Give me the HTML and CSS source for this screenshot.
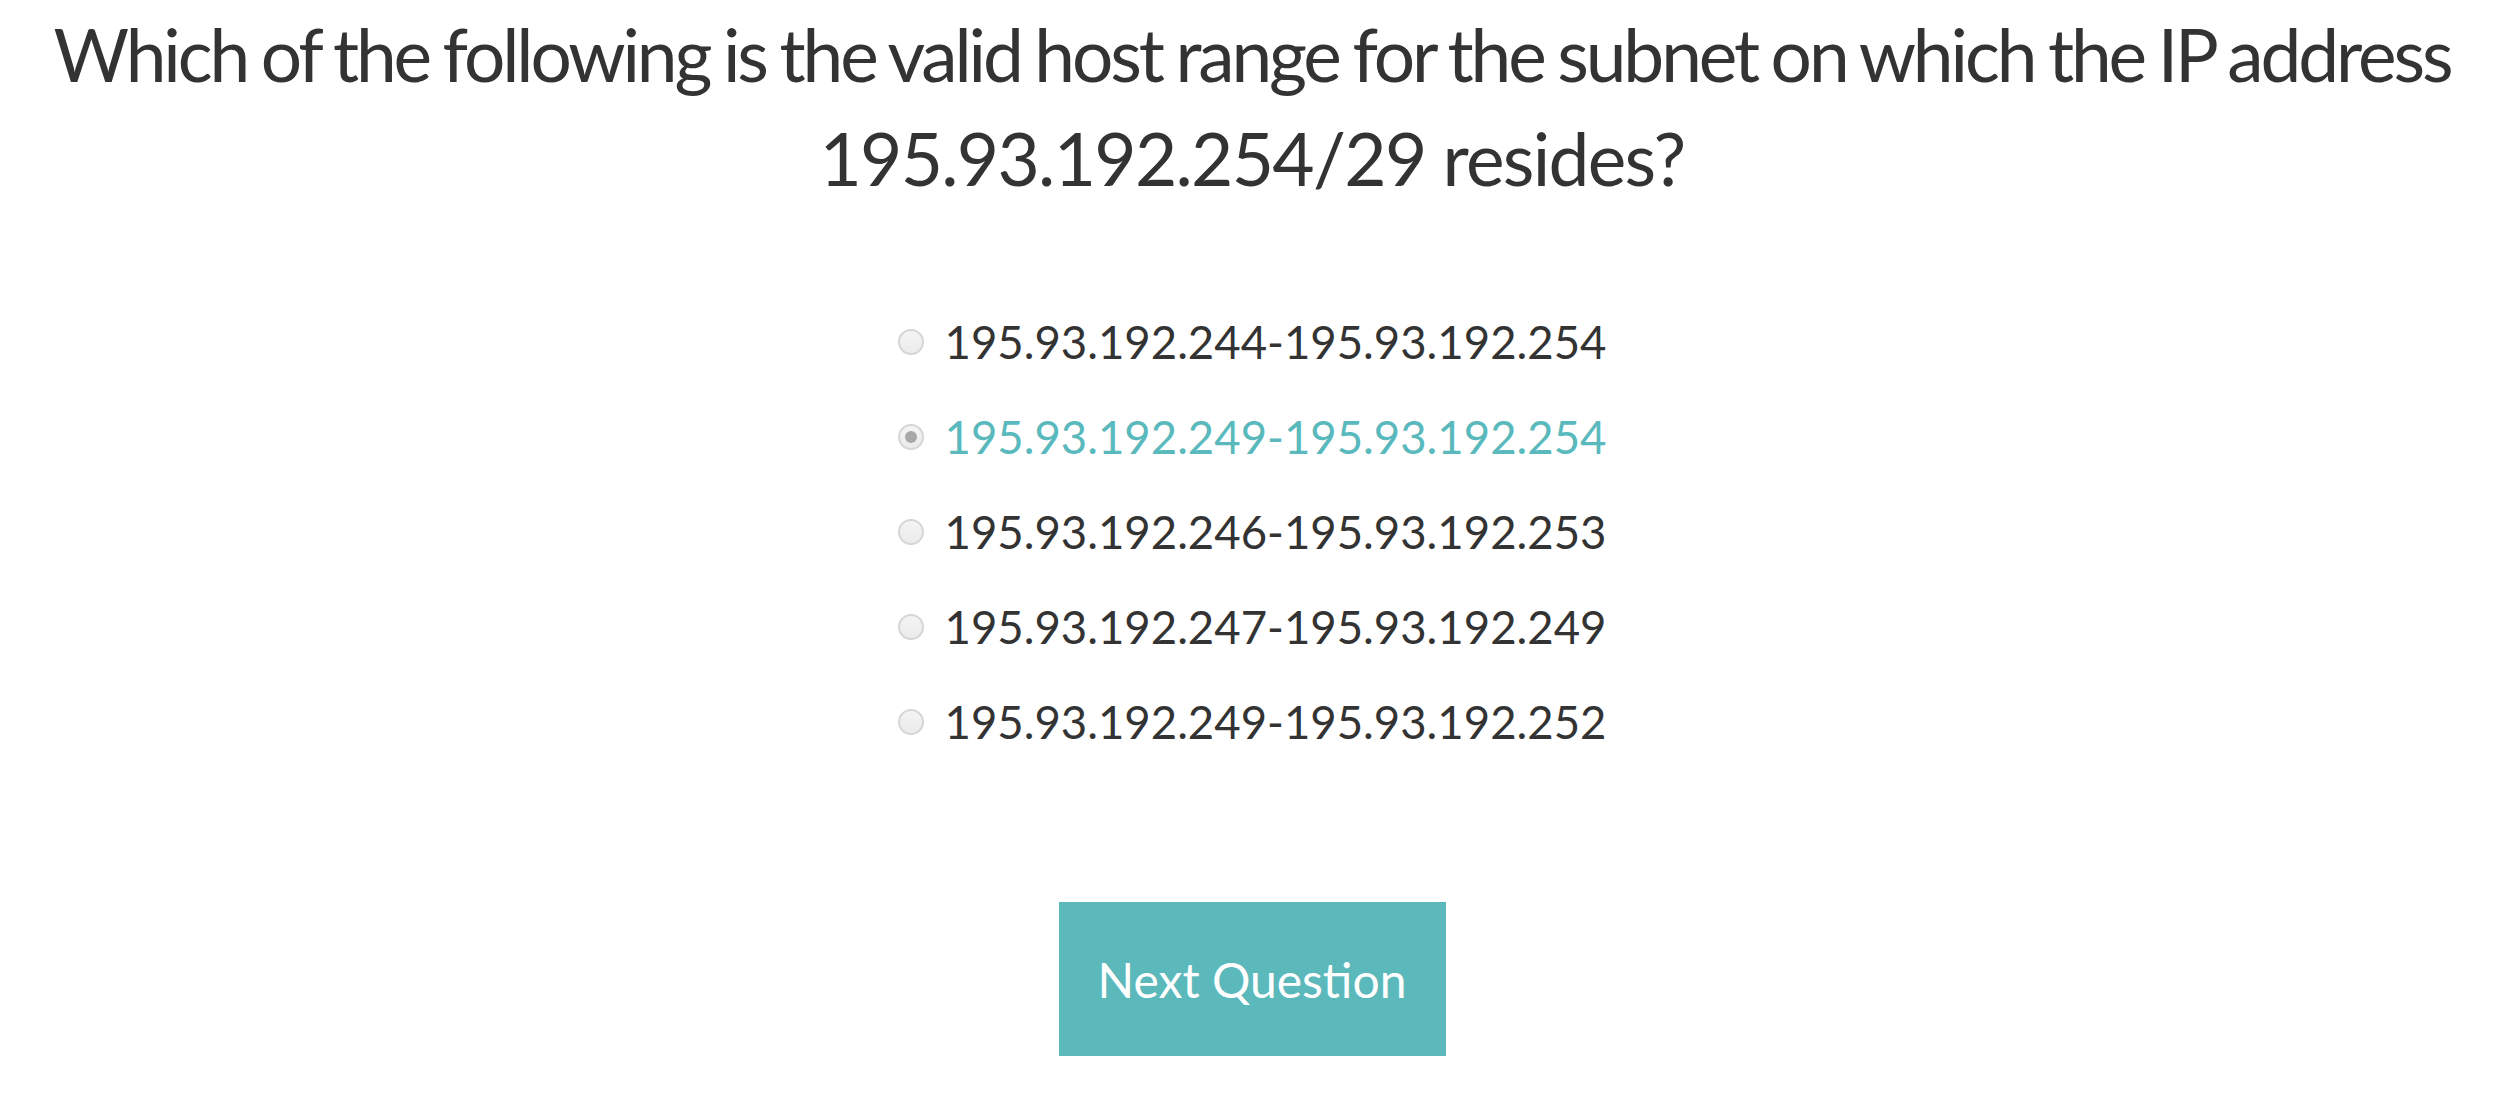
FILE: index.html
```html
<!DOCTYPE html>
<html>
<head>
<meta charset="utf-8">
<link rel="stylesheet" href="styles.css">
</head>
<body>
<main class="quiz">
  <h1 class="question">Which of the following is the valid host range for the subnet on which the IP address<br><span class="question-ip">195.93.192.254/29 resides?</span></h1>
  <form class="options">
    <label class="option"><input type="radio" name="a"><span class="radio"></span><span class="label">195.93.192.244-195.93.192.254</span></label>
    <label class="option selected"><input type="radio" name="a" checked><span class="radio"></span><span class="label">195.93.192.249-195.93.192.254</span></label>
    <label class="option"><input type="radio" name="a"><span class="radio"></span><span class="label">195.93.192.246-195.93.192.253</span></label>
    <label class="option"><input type="radio" name="a"><span class="radio"></span><span class="label">195.93.192.247-195.93.192.249</span></label>
    <label class="option"><input type="radio" name="a"><span class="radio"></span><span class="label">195.93.192.249-195.93.192.252</span></label>
  </form>
  <div class="actions"><button class="next" type="button">Next Question</button></div>
</main>
</body>
</html>
```
FILE: styles.css
```css
html, body { margin: 0; padding: 0; background: #fff; }
body { font-family: Lato, "Open Sans", sans-serif; color: #333; }
.quiz { display: flex; flex-direction: column; align-items: center; padding-right: 16px; }
.question {
  margin: 0;
  padding: 2px 10px 0;
  font-weight: 400;
  font-size: 73px;
  line-height: 104px;
  letter-spacing: -3.1px;
  word-spacing: -2px;
  white-space: nowrap;
  text-align: center;
  color: #333;
}
.question-ip { letter-spacing: -1.7px; word-spacing: 0; }
.options { display: flex; flex-direction: column; align-items: flex-start; margin-top: 84px; }
.option { display: flex; align-items: center; height: 95px; font-size: 45.5px; cursor: pointer; }
.option input { display: none; }
.radio {
  width: 26px; height: 26px; box-sizing: border-box;
  border-radius: 50%;
  border: 2px solid #d6d6d6;
  background: linear-gradient(#f4f4f4, #ebebeb);
  margin-right: 21px;
  display: flex; align-items: center; justify-content: center;
}
.selected .radio::after { content: ""; width: 12px; height: 12px; border-radius: 50%; background: #a8a8a8; }
.selected .label { color: #5ab9bc; }
.actions { margin-top: 133px; }
.next {
  width: 387px; height: 154px;
  border: 0; border-radius: 0;
  background: #5bb8bb; color: #fff;
  font-family: Lato, sans-serif; font-size: 48px;
  padding: 0;
}
```
